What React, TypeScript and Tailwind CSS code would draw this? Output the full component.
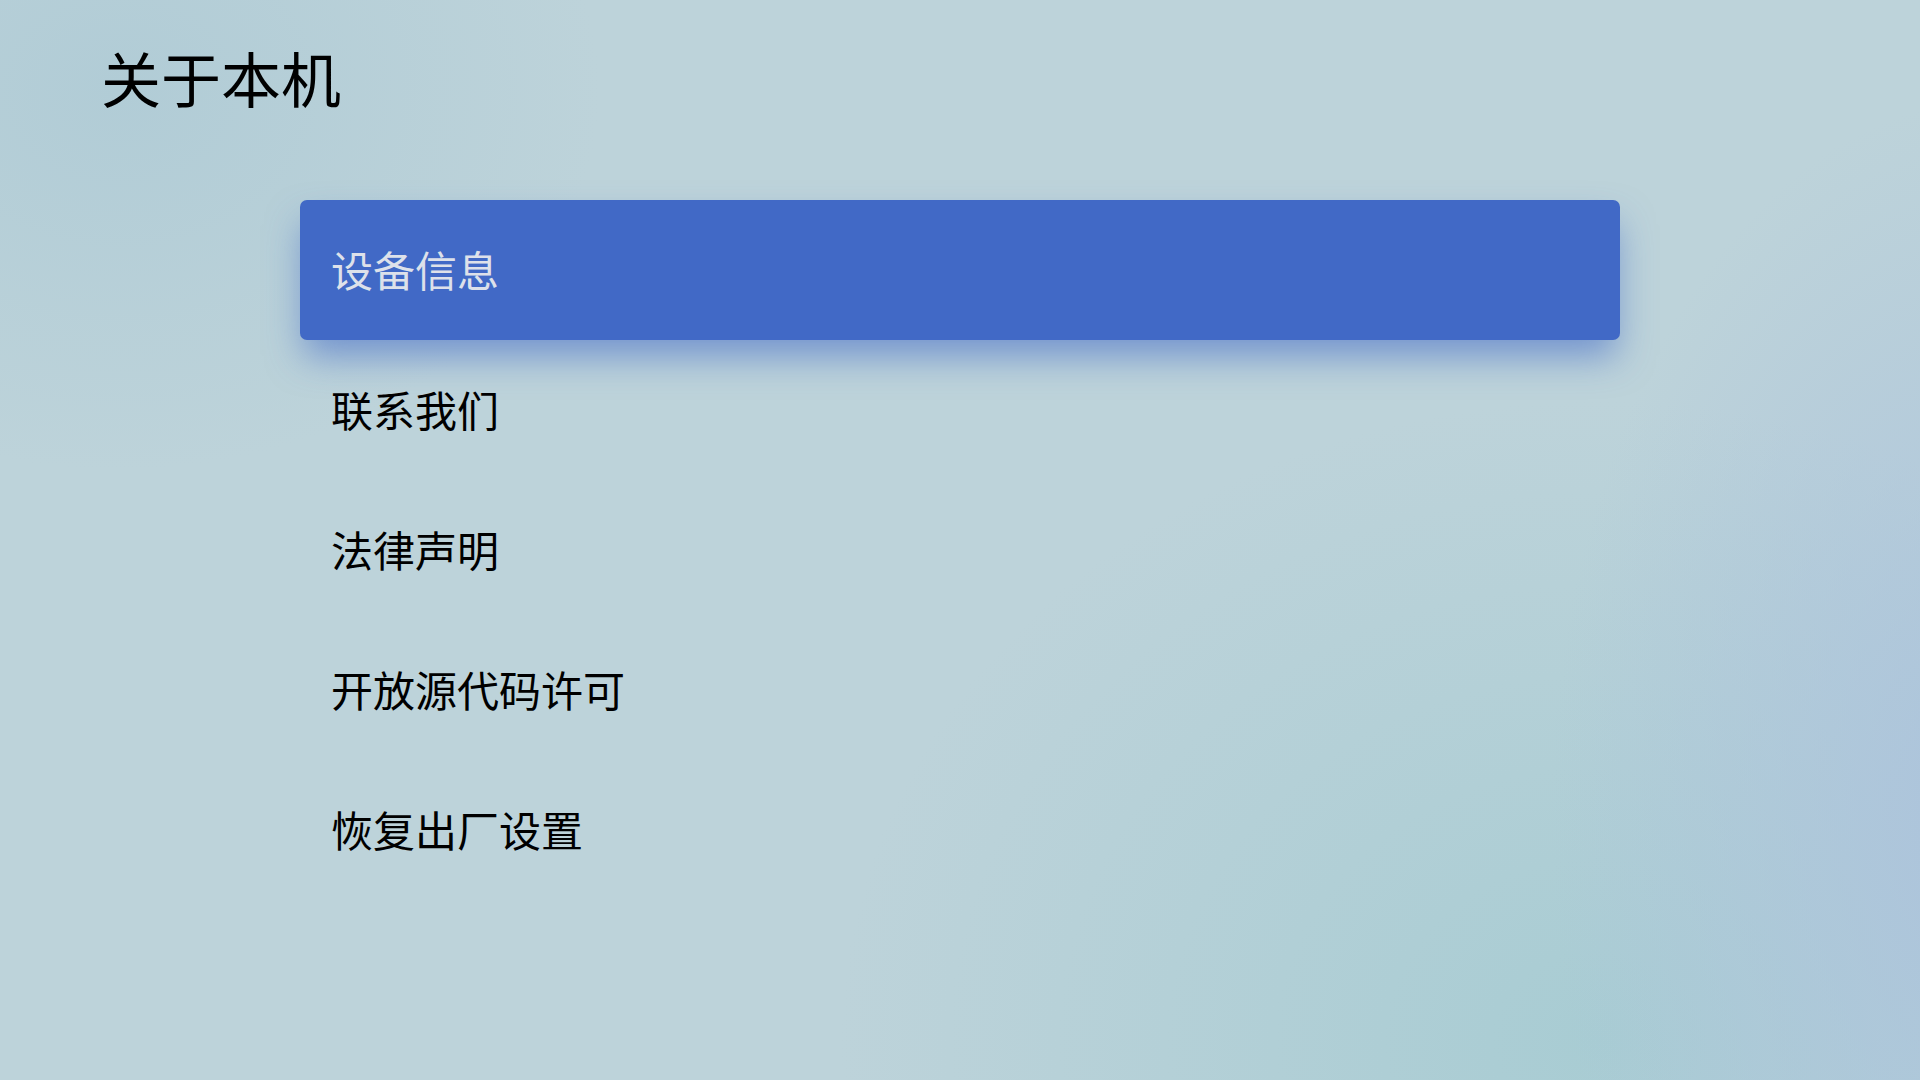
import React, { useState } from 'react';

const items = ['设备信息', '联系我们', '法律声明', '开放源代码许可', '恢复出厂设置'];

export default function AboutDevice() {
  const [active, setActive] = useState(0);

  return (
    <div
      className="relative w-full h-screen overflow-hidden bg-[#bdd3da] font-['Noto_Sans_CJK_SC','Noto_Sans',sans-serif]"
    >
      {/* soft background glows */}
      <div className="absolute inset-0 bg-[radial-gradient(ellipse_480px_380px_at_120px_90px,#b1ccd6,transparent)]" />
      <div className="absolute inset-0 bg-[radial-gradient(ellipse_760px_640px_at_1600px_1040px,#a8ccd3,transparent)]" />
      <div className="absolute inset-0 bg-[radial-gradient(ellipse_440px_720px_at_1990px_820px,#acc3dc,transparent)]" />

      <div className="relative flex flex-col">
        <h1 className="pl-[101px] pt-[37px] h-[200px] text-[60px] leading-[80px] text-black font-normal">关于本机</h1>

        <ul className="flex flex-col w-[1320px] ml-[300px]">
          {items.map((label, idx) => (
            <li
              key={label}
              onClick={() => setActive(idx)}
              className={`h-[140px] flex items-center pl-[31px] pb-[3px] rounded-[7px] text-[42px] cursor-pointer ${
                idx === active
                  ? 'bg-[#4169c6] text-[#dde1ea] shadow-[0_20px_36px_-4px_rgba(65,105,198,0.6)]'
                  : 'text-black'
              }`}
            >
              {label}
            </li>
          ))}
        </ul>
      </div>
    </div>
  );
}
